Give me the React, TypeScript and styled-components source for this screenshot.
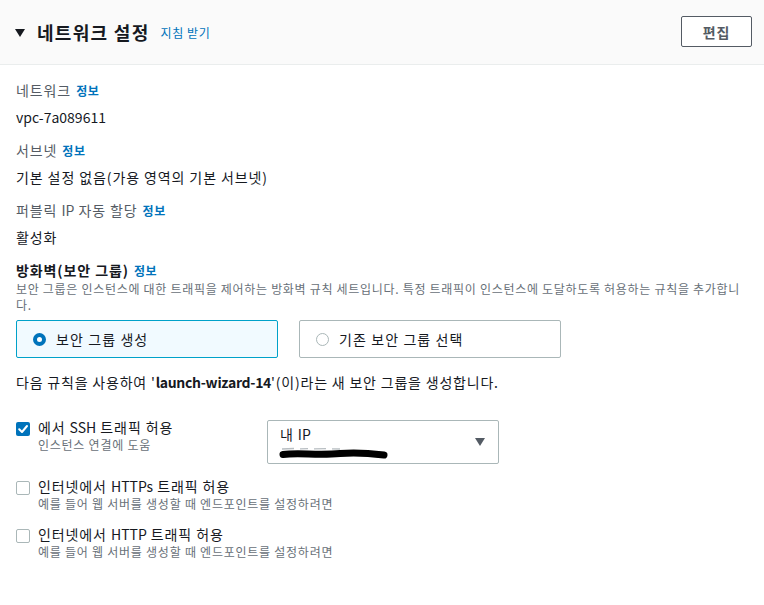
import React from "react";
import styled, { createGlobalStyle } from "styled-components";

const Global = createGlobalStyle`
  html, body { margin: 0; padding: 0; background: #ffffff; }
  body {
    font-family: "Noto Sans CJK KR", "Noto Sans", sans-serif;
    color: #16191f;
    -webkit-font-smoothing: antialiased;
  }
  * { box-sizing: border-box; }
`;

const Panel = styled.section`
  width: 764px;
  background: #ffffff;
`;

const Header = styled.header`
  height: 65px;
  display: flex;
  align-items: center;
  padding: 0 12px 0 15px;
  background: #fafafa;
  border-bottom: 1px solid #eaeded;
`;

const Caret = styled.span`
  width: 0;
  height: 0;
  border-left: 5px solid transparent;
  border-right: 5px solid transparent;
  border-top: 8px solid #16191f;
  margin-right: 12px;
  margin-top: 1px;
`;

const Title = styled.h2`
  margin: 0;
  font-size: 18px;
  font-weight: 700;
  line-height: 24px;
  letter-spacing: 1.3px;
  color: #16191f;
`;

const HeaderLink = styled.a`
  margin-left: 11px;
  font-size: 12px;
  line-height: 16px;
  letter-spacing: 0.6px;
  color: #0073bb;
  text-decoration: none;
  margin-top: 2px;
`;

const Spacer = styled.div`
  flex: 1;
`;

const EditButton = styled.button`
  width: 71px;
  height: 31px;
  border: 1px solid #545b64;
  border-radius: 2px;
  background: #ffffff;
  color: #545b64;
  font-family: inherit;
  font-size: 14px;
  font-weight: 700;
  letter-spacing: 0.8px;
  padding: 0;
  margin-top: -1px;
`;

const Body = styled.div`
  padding: 15px 16px 40px 16px;
  display: flex;
  flex-direction: column;
`;

const FieldList = styled.div`
  display: flex;
  flex-direction: column;
  gap: 13px;
`;

const Field = styled.div`
  display: flex;
  flex-direction: column;
  gap: 6px;
`;

const Label = styled.div<{ $strong?: boolean }>`
  font-size: 14px;
  line-height: 20px;
  letter-spacing: 0.9px;
  color: ${(p) => (p.$strong ? "#16191f" : "#545b64")};
  font-weight: ${(p) => (p.$strong ? 700 : 400)};
`;

const Info = styled.a`
  margin-left: 5px;
  font-size: 12px;
  font-weight: 700;
  letter-spacing: 0.6px;
  color: #0073bb;
  text-decoration: none;
`;

const Value = styled.div`
  font-size: 14px;
  line-height: 20px;
  letter-spacing: 0.9px;
  color: #16191f;
`;

const Latin = styled.span<{ $bold?: boolean }>`
  letter-spacing: ${(p) => (p.$bold ? "-0.3px" : "0")};
  font-weight: ${(p) => (p.$bold ? 700 : "inherit")};
`;

const Firewall = styled.div`
  margin-top: 13px;
  display: flex;
  flex-direction: column;
`;

const Description = styled.p`
  margin: 0;
  font-size: 12px;
  line-height: 16px;
  letter-spacing: 0.7px;
  color: #687078;
`;

const CardRow = styled.div`
  display: flex;
  gap: 21px;
  margin-top: 7px;
`;

const RadioCard = styled.label<{ $selected?: boolean }>`
  width: 262px;
  height: 38px;
  display: flex;
  align-items: center;
  gap: 10px;
  padding: 0 16px;
  border: 1px solid ${(p) => (p.$selected ? "#00a1c9" : "#aab7b8")};
  border-radius: 2px;
  background: ${(p) => (p.$selected ? "#f1faff" : "#ffffff")};
  font-size: 14px;
  line-height: 20px;
  letter-spacing: 1.1px;
  color: #16191f;
`;

const RadioDot = styled.span<{ $checked?: boolean }>`
  width: 13px;
  height: 13px;
  border-radius: 50%;
  flex: 0 0 13px;
  background: #ffffff;
  border: ${(p) => (p.$checked ? "4px solid #0073bb" : "1.5px solid #aab7b8")};
`;

const Notice = styled.div`
  margin-top: 14px;
  font-size: 14px;
  line-height: 20px;
  letter-spacing: 0.8px;
  color: #16191f;
`;

const RuleList = styled.div`
  margin-top: 25px;
  display: flex;
  flex-direction: column;
  gap: 12px;
`;

const RuleRow = styled.div`
  display: flex;
  align-items: flex-start;
`;

const RuleMain = styled.div`
  flex: 0 0 auto;
  min-width: 251px;
  display: flex;
  align-items: flex-start;
  gap: 8px;
`;

const Box = styled.span<{ $checked?: boolean }>`
  width: 14px;
  height: 14px;
  flex: 0 0 14px;
  margin-top: 5px;
  border-radius: 2px;
  display: flex;
  align-items: center;
  justify-content: center;
  background: ${(p) => (p.$checked ? "#0073bb" : "#ffffff")};
  border: ${(p) => (p.$checked ? "none" : "1px solid #aab7b8")};
`;

const RuleText = styled.div`
  display: flex;
  flex-direction: column;
`;

const RuleLabel = styled.div`
  font-size: 14px;
  line-height: 20px;
  letter-spacing: 0.9px;
  color: #16191f;
`;

const RuleSub = styled.div`
  font-size: 12px;
  line-height: 16px;
  letter-spacing: 0.75px;
  color: #687078;
`;

const Select = styled.div`
  margin-top: 3px;
  width: 232px;
  height: 44px;
  border: 1px solid #aab7b8;
  border-radius: 2px;
  display: flex;
  align-items: center;
  padding: 3px 13px 0 12px;
`;

const SelectText = styled.div`
  flex: 1;
  display: flex;
  flex-direction: column;
  align-self: flex-start;
`;

const SelectValue = styled.div`
  font-size: 14px;
  line-height: 20px;
  letter-spacing: 0.9px;
  color: #16191f;
`;

const Redacted = styled.svg`
  display: block;
  margin-left: -2px;
`;

const SelectCaret = styled.span`
  width: 0;
  height: 0;
  border-left: 5.5px solid transparent;
  border-right: 5.5px solid transparent;
  border-top: 8px solid #545b64;
  margin-top: -4px;
`;

function Check() {
  return (
    <svg width="12" height="12" viewBox="0 0 12 12">
      <path d="M2.2 6.2 L5 9 L10 3" fill="none" stroke="#ffffff" strokeWidth="2" strokeLinecap="round" strokeLinejoin="round" />
    </svg>
  );
}

type Rule = { pre: string; latin?: string; post: string; sub: string; checked?: boolean; select?: boolean };

const rules: Rule[] = [
  { pre: "에서 ", latin: "SSH", post: " 트래픽 허용", sub: "인스턴스 연결에 도움", checked: true, select: true },
  { pre: "인터넷에서 ", latin: "HTTPs", post: " 트래픽 허용", sub: "예를 들어 웹 서버를 생성할 때 엔드포인트를 설정하려면" },
  { pre: "인터넷에서 ", latin: "HTTP", post: " 트래픽 허용", sub: "예를 들어 웹 서버를 생성할 때 엔드포인트를 설정하려면" },
];

export default function App() {
  return (
    <>
      <Global />
      <Panel>
        <Header>
          <Caret />
          <Title>네트워크 설정</Title>
          <HeaderLink>지침 받기</HeaderLink>
          <Spacer />
          <EditButton>편집</EditButton>
        </Header>
        <Body>
          <FieldList>
            <Field>
              <Label>
                네트워크<Info>정보</Info>
              </Label>
              <Value>
                <Latin>vpc-7a089611</Latin>
              </Value>
            </Field>
            <Field>
              <Label>
                서브넷<Info>정보</Info>
              </Label>
              <Value>기본 설정 없음(가용 영역의 기본 서브넷)</Value>
            </Field>
            <Field>
              <Label>
                퍼블릭 <Latin>IP</Latin> 자동 할당<Info>정보</Info>
              </Label>
              <Value>활성화</Value>
            </Field>
          </FieldList>
          <Firewall>
            <Label $strong>
              방화벽(보안 그룹)<Info>정보</Info>
            </Label>
            <Description>
              보안 그룹은 인스턴스에 대한 트래픽을 제어하는 방화벽 규칙 세트입니다. 특정 트래픽이 인스턴스에 도달하도록 허용하는 규칙을 추가합니다.
            </Description>
            <CardRow>
              <RadioCard $selected>
                <RadioDot $checked />
                보안 그룹 생성
              </RadioCard>
              <RadioCard>
                <RadioDot />
                기존 보안 그룹 선택
              </RadioCard>
            </CardRow>
          </Firewall>
          <Notice>
            다음 규칙을 사용하여 '<Latin $bold>launch-wizard-14</Latin>'(이)라는 새 보안 그룹을 생성합니다.
          </Notice>
          <RuleList>
            {rules.map((r) => (
              <RuleRow key={r.pre + r.latin}>
                <RuleMain>
                  <Box $checked={r.checked}>{r.checked && <Check />}</Box>
                  <RuleText>
                    <RuleLabel>
                      {r.pre}
                      <Latin>{r.latin}</Latin>
                      {r.post}
                    </RuleLabel>
                    <RuleSub>{r.sub}</RuleSub>
                  </RuleText>
                </RuleMain>
                {r.select && (
                  <Select>
                    <SelectText>
                      <SelectValue>
                        내 <Latin>IP</Latin>
                      </SelectValue>
                      <Redacted width="112" height="18" viewBox="0 0 112 18">
                        <path d="M4 5 L16 4.5 M22 4.8 L30 4.6 M36 4.8 L48 4.6 M54 4.8 L62 5" fill="none" stroke="#b8bec2" strokeWidth="1.3" />
                        <path d="M5 10.5 C20 8.5, 40 11.5, 62 9.5 C78 8, 94 9.5, 106 11" fill="none" stroke="#000000" strokeWidth="7" strokeLinecap="round" />
                      </Redacted>
                    </SelectText>
                    <SelectCaret />
                  </Select>
                )}
              </RuleRow>
            ))}
          </RuleList>
        </Body>
      </Panel>
    </>
  );
}
